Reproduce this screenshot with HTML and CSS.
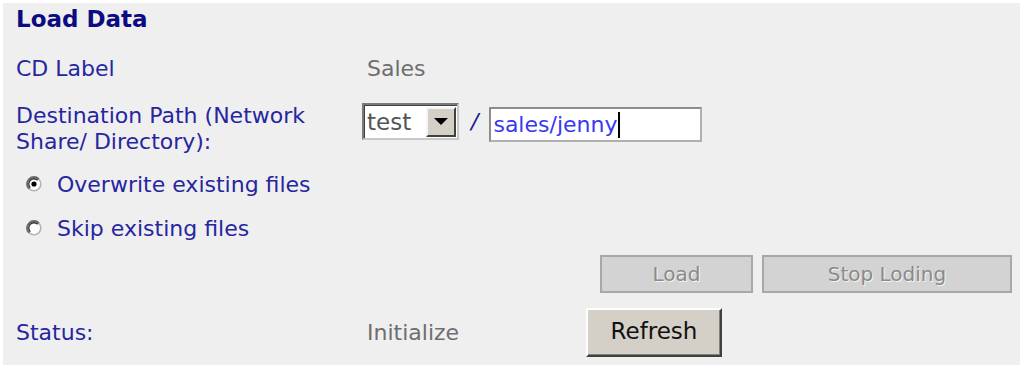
FILE: index.html
```html
<!DOCTYPE html>
<html>
<head>
<meta charset="utf-8">
<link rel="stylesheet" href="styles.css">
</head>
<body>
<div class="panel">
  <div class="title">Load Data</div>
  <div class="row row-cd">
    <div class="label">CD Label</div>
    <div class="value"><span class="val-text">Sales</span></div>
  </div>
  <div class="row row-dest">
    <div class="label label-2">Destination Path (Network<br>Share/ Directory):</div>
    <div class="value dest">
      <div class="select">
        <span class="select-text">test</span>
        <span class="select-btn"><svg width="14" height="8" viewBox="0 0 14 8"><polygon points="0,0 14,0 7,7" fill="#000"/></svg></span>
      </div>
      <span class="slash">/</span>
      <div class="input"><span class="input-text">sales/jenny</span><span class="caret"></span></div>
    </div>
  </div>
  <div class="radio-row r1">
    <span class="radio"><svg width="16" height="16" viewBox="0 0 16 16">
      <circle cx="8" cy="8" r="6.8" fill="#fff" stroke="#b4b4b4" stroke-width="1.6"/>
      <path d="M3.05 12.95 A7 7 0 0 1 12.95 3.05" fill="none" stroke="#6a6a6a" stroke-width="1.8"/>
      <path d="M4.3 11.7 A5.2 5.2 0 0 1 11.7 4.3" fill="none" stroke="#2a2a2a" stroke-width="1.3"/>
      <circle cx="8" cy="8" r="2.6" fill="#000"/>
    </svg></span>
    <span class="radio-label">Overwrite existing files</span>
  </div>
  <div class="radio-row r2">
    <span class="radio"><svg width="16" height="16" viewBox="0 0 16 16">
      <circle cx="8" cy="8" r="6.8" fill="#fff" stroke="#b4b4b4" stroke-width="1.6"/>
      <path d="M3.05 12.95 A7 7 0 0 1 12.95 3.05" fill="none" stroke="#6a6a6a" stroke-width="1.8"/>
      <path d="M4.3 11.7 A5.2 5.2 0 0 1 11.7 4.3" fill="none" stroke="#2a2a2a" stroke-width="1.3"/>
    </svg></span>
    <span class="radio-label">Skip existing files</span>
  </div>
  <div class="row row-btns">
    <div class="label"></div>
    <div class="value btns">
      <button class="btn-dis btn-load">Load</button>
      <button class="btn-dis btn-stop">Stop Loding</button>
    </div>
  </div>
  <div class="row row-status">
    <div class="label">Status:</div>
    <div class="value status">
      <span class="val-text status-text">Initialize</span>
      <button class="btn-refresh">Refresh</button>
    </div>
  </div>
</div>
</body>
</html>
```
FILE: styles.css
```css
html, body {
  margin: 0;
  padding: 0;
  background: #ffffff;
}
body {
  width: 1020px;
  height: 365px;
  overflow: hidden;
  font-family: "DejaVu Sans", Verdana, sans-serif;
  font-size: 22px;
}
.panel {
  margin: 3px 0 0 3px;
  height: 362px;
  background: #efefef;
  padding-left: 13px;
  box-sizing: border-box;
}
.title {
  height: 32px;
  line-height: 32px;
  font-weight: bold;
  font-size: 23px;
  color: #0c0c82;
}
.row {
  display: flex;
}
.label {
  width: 346px;
  flex: none;
  color: #2626a0;
}
.value {
  display: flex;
  align-items: center;
}
.val-text {
  color: #6e6e6e;
  padding-left: 5px;
}
.row-cd {
  margin-top: 18px;
  height: 32px;
  line-height: 32px;
}
.row-dest {
  margin-top: 18px;
  height: 53px;
}
.label-2 {
  line-height: 26px;
}
.dest {
  align-items: flex-start;
}
.select {
  width: 97px;
  height: 37px;
  box-sizing: border-box;
  border-top: 2px solid #7a7a7a;
  border-left: 2px solid #7a7a7a;
  border-right: 2px solid #c8c8c8;
  border-bottom: 2px solid #c8c8c8;
  box-shadow: inset 1px 1px 0 #404040;
  background: #fff;
  display: flex;
  align-items: center;
  justify-content: space-between;
  padding: 2px 1px 2px 3px;
}
.select-text {
  color: #555;
  line-height: 30px;
  font-size: 23px;
}
.select-btn {
  width: 30px;
  height: 30px;
  box-sizing: border-box;
  background: #d4d0c8;
  border-top: 2px solid #f4f4f4;
  border-left: 2px solid #f4f4f4;
  border-right: 2px solid #404040;
  border-bottom: 2px solid #404040;
  display: flex;
  align-items: center;
  justify-content: center;
}
.slash {
  color: #1a1a90;
  margin: 4px 11px 0 12px;
  line-height: 30px;
  font-style: italic;
}
.input {
  margin-top: 4px;
  width: 213px;
  height: 35px;
  box-sizing: border-box;
  border: 2px solid #8c8c8c;
  border-right-color: #b0b0b0;
  border-bottom-color: #b0b0b0;
  background: #fff;
  display: flex;
  align-items: center;
  padding-left: 2px;
}
.input-text {
  color: #3838f0;
  line-height: 28px;
}
.caret {
  width: 2px;
  height: 26px;
  background: #000;
  margin-left: 1px;
}
.radio-row {
  display: flex;
  align-items: center;
  height: 44px;
  padding-left: 10px;
}
.r1 {
  margin-top: 6px;
}
.radio {
  flex: none;
  width: 16px;
  height: 16px;
  display: flex;
  margin-right: 15px;
}
.radio svg {
  display: block;
}
.radio-label {
  color: #2626a0;
}
.row-btns {
  margin-top: 5px;
  height: 38px;
}
.btns {
  padding-left: 238px;
  gap: 9px;
}
.btn-dis {
  height: 38px;
  box-sizing: border-box;
  background: #d3d3d3;
  border: 2px solid #a8a8a8;
  color: #8a8a8a;
  text-shadow: 1px 1px 0 #f4f4f4;
  font-family: "DejaVu Sans", Verdana, sans-serif;
  font-size: 20px;
  padding: 0;
}
.btn-load {
  width: 153px;
}
.btn-stop {
  width: 250px;
}
.row-status {
  margin-top: 15px;
  height: 49px;
  align-items: center;
}
.status {
  align-items: center;
}
.status-text {
  width: 219px;
}
.btn-refresh {
  width: 136px;
  height: 49px;
  box-sizing: border-box;
  background: #d4d0c8;
  border-top: 2px solid #ffffff;
  border-left: 2px solid #ffffff;
  border-right: 2px solid #404040;
  border-bottom: 2px solid #404040;
  box-shadow: inset -1px -1px 0 #808080;
  color: #111;
  font-family: "DejaVu Sans", Verdana, sans-serif;
  font-size: 23px;
  padding: 0 0 4px 0;
}
```
